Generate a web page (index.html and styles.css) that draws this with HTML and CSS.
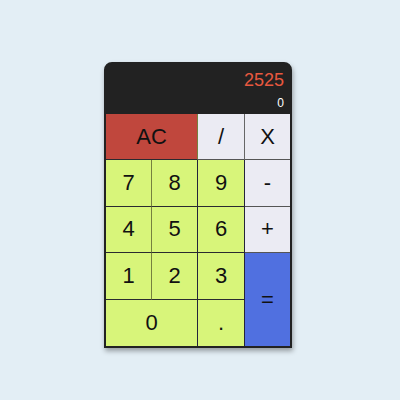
FILE: index.html
```html
<!DOCTYPE html>
<html>
<head>
<meta charset="utf-8">
<link rel="stylesheet" href="styles.css">
</head>
<body>
<div class="calc">
  <div class="display">
    <div class="expr">2525</div>
    <div class="result">0</div>
  </div>
  <div class="keys">
    <div class="key clear wide c1">AC</div>
    <div class="key op">/</div>
    <div class="key op last">X</div>
    <div class="key num c1">7</div>
    <div class="key num">8</div>
    <div class="key num">9</div>
    <div class="key op last">-</div>
    <div class="key num c1">4</div>
    <div class="key num">5</div>
    <div class="key num">6</div>
    <div class="key op last">+</div>
    <div class="key num c1">1</div>
    <div class="key num">2</div>
    <div class="key num">3</div>
    <div class="key eq tall last bottom">=</div>
    <div class="key num wide bottom">0</div>
    <div class="key num bottom">.</div>
  </div>
</div>
</body>
</html>
```
FILE: styles.css
```css
html, body {
  margin: 0;
  height: 100%;
}
body {
  background: #e3eef5;
  font-family: "Liberation Sans", Arial, sans-serif;
  padding: 62px 0 0 104px;
  box-sizing: border-box;
}
.calc {
  width: 188px;
  border: 2px solid #222;
  border-radius: 8px 8px 0 0;
  box-sizing: border-box;
  box-shadow: 1px 3px 5px rgba(0, 0, 0, 0.35);
  overflow: hidden;
  background: #222;
}
.display {
  height: 50px;
  background: #222222;
  display: flex;
  flex-direction: column;
  justify-content: flex-end;
  align-items: flex-end;
  padding: 0 6px 4px 6px;
  box-sizing: border-box;
}
.expr {
  color: #e8583f;
  font-size: 18px;
  line-height: 20px;
  margin-bottom: 6px;
}
.result {
  color: #ffffff;
  font-size: 12px;
  line-height: 14px;
}
.keys {
  display: grid;
  grid-template-columns: 46px 46px 47px 45px;
  grid-template-rows: repeat(5, 1fr);
  height: 232px;
}
.key {
  display: flex;
  align-items: center;
  justify-content: center;
  font-size: 22px;
  color: #111;
  box-sizing: border-box;
  border-right: 1px solid #24243a;
  border-bottom: 1px solid #2a2a30;
}
.key.c1 {
  border-right-color: #76803f;
}
.key.last {
  border-right: none;
}
.key.bottom {
  border-bottom: none;
}
.wide {
  grid-column: span 2;
}
.tall {
  grid-row: span 2;
}
.clear {
  background: #c0473d;
  border-right-color: #555;
}
.op {
  background: #ebebf3;
  border-right-color: #666;
  border-bottom-color: #555;
}
.num {
  background: #d8f57a;
}
.eq {
  background: #5070e0;
}
```
